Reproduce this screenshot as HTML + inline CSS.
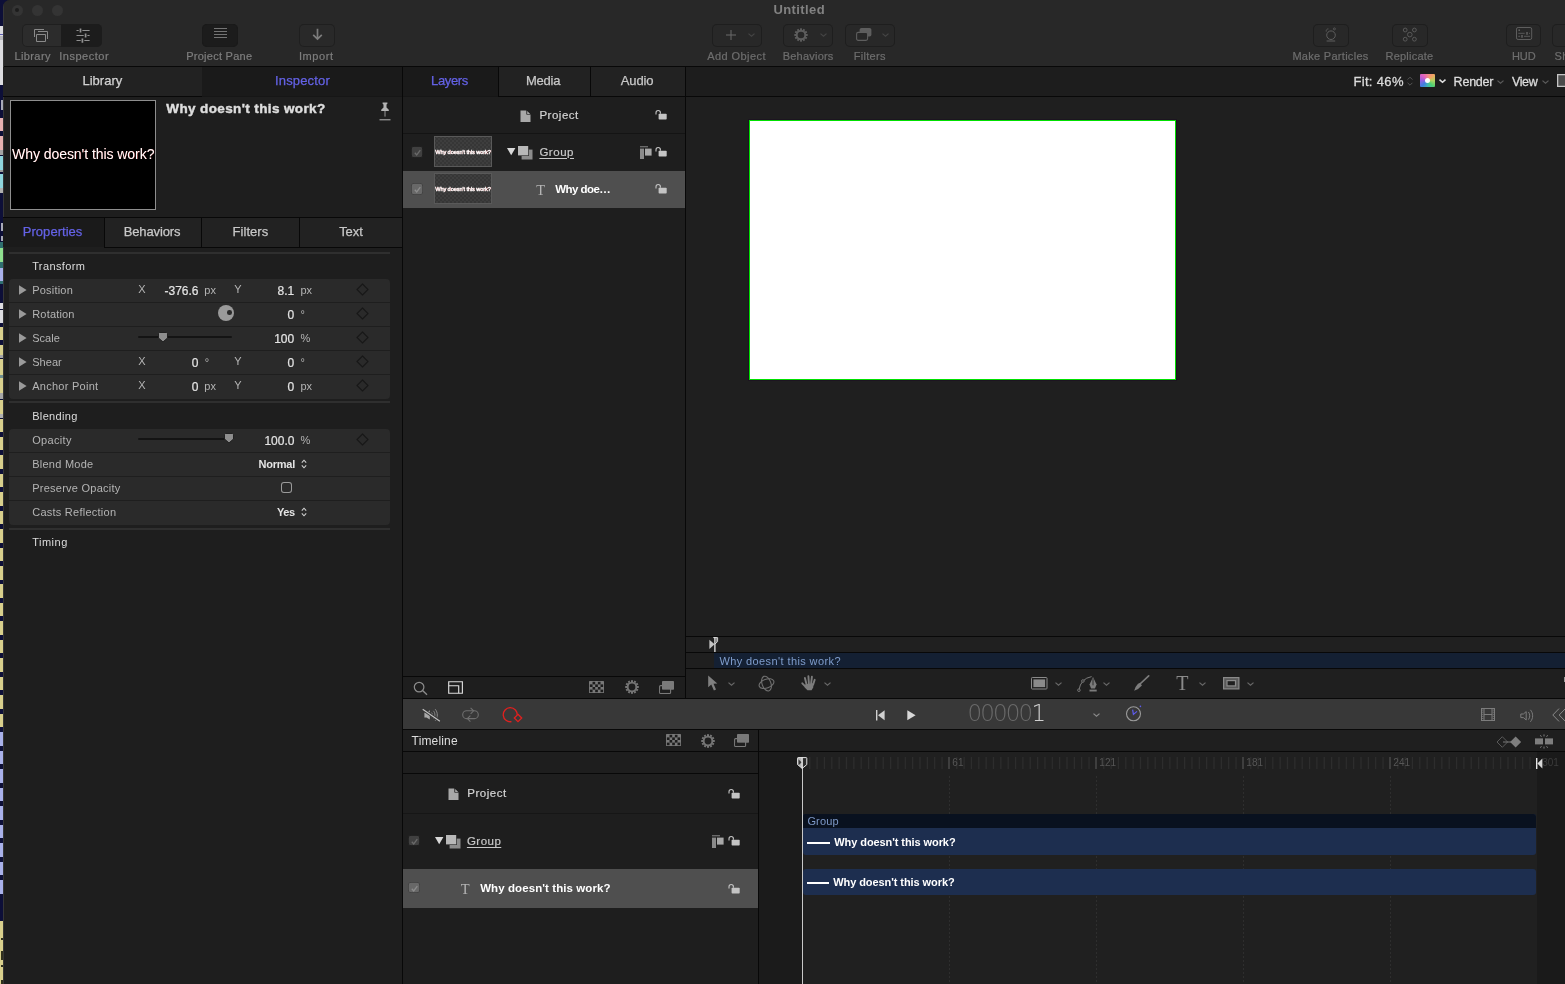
<!DOCTYPE html>
<html lang="en"><head><meta charset="utf-8"><title>Untitled</title>
<style>
html,body{margin:0;padding:0}
body{width:1565px;height:984px;overflow:hidden;position:relative;background:#0d0f38;font-family:"Liberation Sans",sans-serif}
body div,body svg,.t{position:absolute}
.t{white-space:nowrap;line-height:1}
svg{overflow:visible}
</style></head><body>
<div style="left:0px;top:25.5px;width:3px;height:59.5px;background:#dcdce0;"></div>
<div style="left:0px;top:34.0px;width:3px;height:1.0px;background:#5a5ab0;"></div>
<div style="left:0px;top:35.5px;width:3px;height:4.0px;background:#b8b8bc;"></div>
<div style="left:0px;top:118.0px;width:3px;height:13.0px;background:#e6b1b1;"></div>
<div style="left:0px;top:135.5px;width:3px;height:14.0px;background:#e6b1b1;"></div>
<div style="left:0px;top:149.5px;width:3px;height:5.5px;background:#a6a6a6;"></div>
<div style="left:0px;top:155.5px;width:3px;height:14.0px;background:#8fd6de;"></div>
<div style="left:0px;top:169.5px;width:3px;height:2.5px;background:#9a9a9a;"></div>
<div style="left:0px;top:174.0px;width:3px;height:13.5px;background:#8fd6de;"></div>
<div style="left:0px;top:188.0px;width:3px;height:4.5px;background:#b0b0b0;"></div>
<div style="left:0px;top:242.0px;width:3px;height:5.5px;background:#2f6f70;"></div>
<div style="left:0px;top:247.5px;width:3px;height:14.5px;background:#8fe08f;"></div>
<div style="left:0px;top:262.0px;width:3px;height:5.5px;background:#2f6f70;"></div>
<div style="left:0px;top:267.5px;width:3px;height:13.5px;background:#a9b1ea;"></div>
<div style="left:0px;top:281.0px;width:3px;height:3.0px;background:#2f6f70;"></div>
<div style="left:0px;top:309.5px;width:3px;height:13.0px;background:#dcdce0;"></div>
<div style="left:0px;top:303.0px;width:3px;height:5.5px;background:#dcdce0;"></div>
<div style="left:0px;top:327.0px;width:3px;height:13.0px;background:#d8cf8c;"></div>
<div style="left:0px;top:344.5px;width:3px;height:10.0px;background:#d8cf8c;"></div>
<div style="left:0px;top:354.5px;width:3px;height:3.5px;background:#a6a6a6;"></div>
<div style="left:0px;top:359.0px;width:3px;height:15.5px;background:#d8cf8c;"></div>
<div style="left:0px;top:374.5px;width:3px;height:3.0px;background:#6f8f90;"></div>
<div style="left:0px;top:378.0px;width:3px;height:15.0px;background:#d8cf8c;"></div>
<div style="left:0px;top:393.0px;width:3px;height:6.0px;background:#a6a6a6;"></div>
<div style="left:0px;top:400.0px;width:3px;height:13.5px;background:#d8cf8c;"></div>
<div style="left:0px;top:414.0px;width:3px;height:3.5px;background:#b0b0b0;"></div>
<div style="left:0px;top:418.5px;width:3px;height:13.5px;background:#d8cf8c;"></div>
<div style="left:0px;top:436.5px;width:3px;height:13.5px;background:#d8cf8c;"></div>
<div style="left:0px;top:455.0px;width:3px;height:13.5px;background:#d8cf8c;"></div>
<div style="left:0px;top:473.5px;width:3px;height:13.5px;background:#d8cf8c;"></div>
<div style="left:0px;top:492.0px;width:3px;height:13.5px;background:#d8cf8c;"></div>
<div style="left:0px;top:510.5px;width:3px;height:13.5px;background:#d8cf8c;"></div>
<div style="left:0px;top:529.0px;width:3px;height:13.5px;background:#d8cf8c;"></div>
<div style="left:0px;top:547.5px;width:3px;height:13.5px;background:#d8cf8c;"></div>
<div style="left:0px;top:566.0px;width:3px;height:13.5px;background:#d8cf8c;"></div>
<div style="left:0px;top:584.0px;width:3px;height:13.5px;background:#d8cf8c;"></div>
<div style="left:0px;top:602.5px;width:3px;height:13.5px;background:#d8cf8c;"></div>
<div style="left:0px;top:621.0px;width:3px;height:13.5px;background:#d8cf8c;"></div>
<div style="left:0px;top:639.5px;width:3px;height:13.5px;background:#d8cf8c;"></div>
<div style="left:0px;top:658.0px;width:3px;height:13.5px;background:#d8cf8c;"></div>
<div style="left:0px;top:676.5px;width:3px;height:13.5px;background:#d8cf8c;"></div>
<div style="left:0px;top:695.0px;width:3px;height:13.5px;background:#d8cf8c;"></div>
<div style="left:0px;top:713.5px;width:3px;height:13.5px;background:#d8cf8c;"></div>
<div style="left:0px;top:732.0px;width:3px;height:13.5px;background:#a9b1ea;"></div>
<div style="left:0px;top:750.5px;width:3px;height:13.5px;background:#a9b1ea;"></div>
<div style="left:0px;top:769.0px;width:3px;height:13.5px;background:#a9b1ea;"></div>
<div style="left:0px;top:787.5px;width:3px;height:13.5px;background:#a9b1ea;"></div>
<div style="left:0px;top:806.0px;width:3px;height:13.5px;background:#a9b1ea;"></div>
<div style="left:0px;top:824.5px;width:3px;height:13.5px;background:#a9b1ea;"></div>
<div style="left:0px;top:843.0px;width:3px;height:13.5px;background:#a9b1ea;"></div>
<div style="left:0px;top:861.5px;width:3px;height:13.5px;background:#a9b1ea;"></div>
<div style="left:0px;top:880.0px;width:3px;height:13.5px;background:#a9b1ea;"></div>
<div style="left:0px;top:921.0px;width:3px;height:63.0px;background:#d8cf8c;"></div>
<div style="left:0.5px;top:100px;width:2.5px;height:10px;background:#d0d0d8;opacity:.8;"></div>
<div style="left:0.5px;top:223px;width:2.5px;height:8px;background:#d0d0d8;opacity:.8;"></div>
<div style="left:0.5px;top:236px;width:2.5px;height:5px;background:#d0d0d8;opacity:.8;"></div>
<div style="left:0.5px;top:937.5px;width:2.5px;height:2.5px;background:#30301c;"></div>
<div style="left:0.5px;top:950.5px;width:2.5px;height:9.0px;background:#30301c;"></div>
<div style="left:0.5px;top:965px;width:2.5px;height:2px;background:#30301c;"></div>
<div style="left:0.5px;top:979.5px;width:2.5px;height:4.5px;background:#30301c;"></div>
<div id="win" style="left:3px;top:0;width:1562px;height:984px;background:#1e1e1e;border-top-left-radius:7px;overflow:hidden">
<div style="left:-3px;top:0;width:1565px;height:984px;will-change:transform">
<div style="left:3px;top:0px;width:1562px;height:66px;background:#282828;"></div>
<div style="left:3px;top:66px;width:1562px;height:1px;background:#080808;"></div>
<div style="left:3px;top:0px;width:1px;height:984px;background:#363636;"></div>
<div style="left:11.5px;top:4.5px;width:11px;height:11px;border-radius:50%;background:#343434"></div>
<div style="left:31.5px;top:4.5px;width:11px;height:11px;border-radius:50%;background:#343434"></div>
<div style="left:51.5px;top:4.5px;width:11px;height:11px;border-radius:50%;background:#343434"></div>
<div style="left:15px;top:8px;width:4px;height:4px;border-radius:50%;background:#1c1c1c"></div>
<span class="t" style="left:773.5px;top:2.90px;font-size:13px;color:#828282;font-weight:700;letter-spacing:0.39px;">Untitled</span>
<div style="left:21.5px;top:24px;width:80.5px;height:22.5px;border-radius:5px;background:#2c2c2c;box-shadow:inset 0 0 0 1px #1f1f1f;overflow:hidden"><div style="left:39.5px;top:0;width:41px;height:22.5px;background:#1c1c1c"></div></div>
<div style="left:202px;top:24px;width:36px;height:22.5px;border-radius:5px;background:#1c1c1c;box-shadow:inset 0 0 0 1px #1a1a1a"></div>
<div style="left:299px;top:24px;width:36px;height:22.5px;border-radius:5px;background:#292929;box-shadow:inset 0 0 0 1px #1f1f1f"></div>
<div style="left:712.3px;top:24px;width:49.5px;height:22.5px;border-radius:5px;background:#282828;box-shadow:inset 0 0 0 1px #1e1e1e"></div>
<div style="left:783.3px;top:24px;width:49.700000000000045px;height:22.5px;border-radius:5px;background:#282828;box-shadow:inset 0 0 0 1px #1e1e1e"></div>
<div style="left:845.2px;top:24px;width:49.5px;height:22.5px;border-radius:5px;background:#282828;box-shadow:inset 0 0 0 1px #1e1e1e"></div>
<div style="left:1313.1px;top:24px;width:35.600000000000136px;height:22.5px;border-radius:5px;background:#282828;box-shadow:inset 0 0 0 1px #1e1e1e"></div>
<div style="left:1392.2px;top:24px;width:35.399999999999864px;height:22.5px;border-radius:5px;background:#282828;box-shadow:inset 0 0 0 1px #1e1e1e"></div>
<div style="left:1506.3px;top:24px;width:35.200000000000045px;height:22.5px;border-radius:5px;background:#282828;box-shadow:inset 0 0 0 1px #1e1e1e"></div>
<div style="left:1552.4px;top:24px;width:37.59999999999991px;height:22.5px;border-radius:5px;background:#282828;box-shadow:inset 0 0 0 1px #1e1e1e"></div>
<span class="t" style="left:14.4px;top:50.80px;font-size:11px;color:#7e7e7e;letter-spacing:0.41px;-webkit-text-stroke:0.2px;">Library</span>
<span class="t" style="left:59.2px;top:50.80px;font-size:11px;color:#7e7e7e;letter-spacing:0.52px;-webkit-text-stroke:0.2px;">Inspector</span>
<span class="t" style="left:186.2px;top:50.80px;font-size:11px;color:#7e7e7e;letter-spacing:0.26px;-webkit-text-stroke:0.2px;">Project Pane</span>
<span class="t" style="left:299.0px;top:50.80px;font-size:11px;color:#7e7e7e;letter-spacing:0.56px;-webkit-text-stroke:0.2px;">Import</span>
<span class="t" style="left:707.2px;top:50.80px;font-size:11px;color:#6e6e6e;letter-spacing:0.43px;-webkit-text-stroke:0.2px;">Add Object</span>
<span class="t" style="left:782.7px;top:50.80px;font-size:11px;color:#6e6e6e;letter-spacing:0.22px;-webkit-text-stroke:0.2px;">Behaviors</span>
<span class="t" style="left:853.8px;top:50.80px;font-size:11px;color:#6e6e6e;letter-spacing:0.29px;-webkit-text-stroke:0.2px;">Filters</span>
<span class="t" style="left:1292.4px;top:50.80px;font-size:11px;color:#6e6e6e;letter-spacing:0.29px;-webkit-text-stroke:0.2px;">Make Particles</span>
<span class="t" style="left:1385.5px;top:50.80px;font-size:11px;color:#6e6e6e;letter-spacing:0.22px;-webkit-text-stroke:0.2px;">Replicate</span>
<span class="t" style="left:1511.9px;top:50.80px;font-size:11px;color:#6e6e6e;letter-spacing:0.03px;-webkit-text-stroke:0.2px;">HUD</span>
<span class="t" style="left:1554.4px;top:50.80px;font-size:11px;color:#6e6e6e;letter-spacing:0.4px;-webkit-text-stroke:0.2px;">Share</span>
<svg style="left:33px;top:28px;" width="16" height="15" viewBox="0 0 16 15"><path d="M1.5 9V1.5h9.5M5 3.5h9.5v7.5M3.5 6.5h9v7h-9z" fill="none" stroke="#8a8a8a" stroke-width="1"/></svg>
<svg style="left:75.5px;top:28px;" width="15" height="14" viewBox="0 0 15 14"><path d="M0.5 2.5h2.2M6.4 2.5h7.2M0.5 7.5h7.2M11.4 7.5h2.2M0.5 12.5h4.2M8.3 12.5h5.3" stroke="#909090" stroke-width="1.1" fill="none"/><path d="M4.5 0.4v4.1M9.6 5.5v4.1M6.4 10.6v4.1" stroke="#909090" stroke-width="1.7"/></svg>
<svg style="left:214px;top:28px;" width="13" height="10" viewBox="0 0 13 10"><path d="M0 0.5h13M0 3.5h13M0 6.5h13M0 9.5h13" stroke="#747474" stroke-width="1"/></svg>
<svg style="left:312px;top:28px;" width="11" height="13" viewBox="0 0 11 13"><path d="M5.5 0.8v10M1.2 6.8l4.3 4.3l4.3-4.3" fill="none" stroke="#7c7c7c" stroke-width="1.7"/></svg>
<svg style="left:725.5px;top:29.7px;" width="10" height="10" viewBox="0 0 10 10"><path d="M5 0v10M0 5h10" stroke="#6a6a6a" stroke-width="1"/></svg>
<svg style="left:748.3px;top:33.2px;" width="7" height="4.5" viewBox="0 0 7 4.5"><path d="M0.5 0.6L3.5 3.3L6.5 0.6" fill="none" stroke="#444444" stroke-width="1.2"/></svg>
<svg style="left:793.3px;top:26.6px;" width="16" height="16" viewBox="0 0 16 16"><g transform="translate(8 8) scale(0.98)"><circle r="4.35" fill="none" stroke="#5e5e5e" stroke-width="1.9"/><rect x="-1" y="-6.8" width="2" height="2" fill="#5e5e5e" transform="rotate(0)"/><rect x="-1" y="-6.8" width="2" height="2" fill="#5e5e5e" transform="rotate(30)"/><rect x="-1" y="-6.8" width="2" height="2" fill="#5e5e5e" transform="rotate(60)"/><rect x="-1" y="-6.8" width="2" height="2" fill="#5e5e5e" transform="rotate(90)"/><rect x="-1" y="-6.8" width="2" height="2" fill="#5e5e5e" transform="rotate(120)"/><rect x="-1" y="-6.8" width="2" height="2" fill="#5e5e5e" transform="rotate(150)"/><rect x="-1" y="-6.8" width="2" height="2" fill="#5e5e5e" transform="rotate(180)"/><rect x="-1" y="-6.8" width="2" height="2" fill="#5e5e5e" transform="rotate(210)"/><rect x="-1" y="-6.8" width="2" height="2" fill="#5e5e5e" transform="rotate(240)"/><rect x="-1" y="-6.8" width="2" height="2" fill="#5e5e5e" transform="rotate(270)"/><rect x="-1" y="-6.8" width="2" height="2" fill="#5e5e5e" transform="rotate(300)"/><rect x="-1" y="-6.8" width="2" height="2" fill="#5e5e5e" transform="rotate(330)"/></g></svg>
<svg style="left:819.5px;top:33.2px;" width="7" height="4.5" viewBox="0 0 7 4.5"><path d="M0.5 0.6L3.5 3.3L6.5 0.6" fill="none" stroke="#444444" stroke-width="1.2"/></svg>
<svg style="left:855.8px;top:28.2px;" width="15.5" height="13" viewBox="0 0 15.5 13"><rect x="3.6" y="0" width="11.8" height="8.6" rx="1.8" fill="#5e5e5e"/><rect x="0.6" y="4.4" width="11" height="8" rx="1.6" fill="#282828" stroke="#5e5e5e" stroke-width="1.1"/></svg>
<svg style="left:881.5px;top:33.2px;" width="7" height="4.5" viewBox="0 0 7 4.5"><path d="M0.5 0.6L3.5 3.3L6.5 0.6" fill="none" stroke="#444444" stroke-width="1.2"/></svg>
<svg style="left:1324px;top:26.5px;" width="14" height="15" viewBox="0 0 14 15"><circle cx="7" cy="8.2" r="4.3" fill="none" stroke="#5e5e5e" stroke-width="1"/><circle cx="10.4" cy="1.9" r="1" fill="none" stroke="#5e5e5e" stroke-width="0.8"/><path d="M2.2 4.6C2 3 3 1.8 4.4 1.9" fill="none" stroke="#5e5e5e" stroke-width="0.9"/><path d="M2.6 14h8.6" stroke="#5e5e5e" stroke-width="1"/></svg>
<svg style="left:1402px;top:26.5px;" width="16" height="16" viewBox="0 0 16 16"><g fill="none" stroke="#5e5e5e" stroke-width="0.9"><circle cx="7.8" cy="7.6" r="2.3"/><circle cx="3.2" cy="3" r="1.9"/><circle cx="12.4" cy="3" r="1.9"/><circle cx="3.2" cy="12.2" r="1.9"/><circle cx="12.4" cy="12.2" r="1.9"/></g></svg>
<svg style="left:1516px;top:27.1px;" width="16" height="13" viewBox="0 0 16 13"><rect x="0.5" y="0.5" width="15.2" height="12" rx="1.6" fill="none" stroke="#5e5e5e" stroke-width="1"/><rect x="2.4" y="2.4" width="1.6" height="1.6" fill="#5e5e5e"/><path d="M2.3 6.3h6.4M13 6.3h1M2.3 9.3h1.8M8 9.3h6" stroke="#5e5e5e" stroke-width="0.9"/><path d="M11 4.9v2.8M6 7.9v2.8" stroke="#5e5e5e" stroke-width="1.6"/></svg>
<div style="left:3px;top:67px;width:199px;height:29px;background:#222222;"></div>
<div style="left:202px;top:67px;width:200px;height:29px;background:#1a1a1a;"></div>
<div style="left:3px;top:96px;width:199px;height:1px;background:#080808;"></div>
<div style="left:202px;top:96px;width:200px;height:1px;background:#161616;"></div>
<div style="left:403px;top:96px;width:95px;height:1px;background:#161616;"></div>
<div style="left:402px;top:67px;width:1px;height:917px;background:#080808;"></div>
<span class="t" style="left:82.4px;top:74.00px;font-size:13px;color:#d2d2d2;letter-spacing:0.04px;-webkit-text-stroke:0.25px;">Library</span>
<span class="t" style="left:275.0px;top:73.80px;font-size:13px;color:#6462e6;letter-spacing:0.16px;-webkit-text-stroke:0.25px;">Inspector</span>
<div style="left:10px;top:100px;width:146px;height:110px;background:#000;box-shadow:inset 0 0 0 1px #8e8e8e"></div>
<span class="t" style="left:12.0px;top:147.00px;font-size:14px;color:#fff;letter-spacing:-0.05px;text-shadow:0.3px 0.3px 0.2px rgba(255,30,30,.55);">Why doesn't this work?</span>
<span class="t" style="left:166.3px;top:102.00px;font-size:13.5px;color:#dedede;font-weight:700;letter-spacing:0.38px;-webkit-text-stroke:0.45px;">Why doesn't this work?</span>
<svg style="left:378.5px;top:101.5px;" width="12" height="19" viewBox="0 0 12 19"><path d="M3.6 0.6h4.8v1.2l-0.9 0.8v3l2.3 2.2v1.3h-7.6v-1.3l2.3-2.2v-3l-0.9-0.8z" fill="#b4b4b4"/><path d="M6 9v5.6" stroke="#b4b4b4" stroke-width="0.8"/><path d="M0.5 17.8h11" stroke="#b4b4b4" stroke-width="1"/></svg>
<div style="left:3px;top:217px;width:399px;height:1px;background:#080808;"></div>
<div style="left:3px;top:218px;width:101px;height:29px;background:#1a1a1a;"></div>
<div style="left:104px;top:218px;width:97px;height:29px;background:#222222;"></div>
<div style="left:104px;top:218px;width:1px;height:30px;background:#080808;"></div>
<div style="left:201px;top:218px;width:98px;height:29px;background:#222222;"></div>
<div style="left:201px;top:218px;width:1px;height:30px;background:#080808;"></div>
<div style="left:299px;top:218px;width:103px;height:29px;background:#222222;"></div>
<div style="left:299px;top:218px;width:1px;height:30px;background:#080808;"></div>
<div style="left:104px;top:247px;width:298px;height:1px;background:#080808;"></div>
<span class="t" style="left:22.8px;top:224.50px;font-size:13px;color:#6462e6;letter-spacing:0.03px;-webkit-text-stroke:0.25px;">Properties</span>
<span class="t" style="left:123.7px;top:224.50px;font-size:13px;color:#c8c8c8;letter-spacing:-0.13px;-webkit-text-stroke:0.25px;">Behaviors</span>
<span class="t" style="left:232.6px;top:224.50px;font-size:13px;color:#c8c8c8;letter-spacing:0.03px;-webkit-text-stroke:0.25px;">Filters</span>
<span class="t" style="left:339.2px;top:224.50px;font-size:13px;color:#c8c8c8;letter-spacing:-0.08px;-webkit-text-stroke:0.25px;">Text</span>
<div style="left:9px;top:252px;width:381px;height:1.5px;background:#2f2f2f;"></div>
<div style="left:9px;top:401px;width:381px;height:1.5px;background:#2f2f2f;"></div>
<div style="left:9px;top:528px;width:381px;height:1.5px;background:#2f2f2f;"></div>
<span class="t" style="left:32.2px;top:260.80px;font-size:11px;color:#dcdcdc;letter-spacing:0.37px;">Transform</span>
<span class="t" style="left:32.2px;top:410.80px;font-size:11px;color:#dcdcdc;letter-spacing:0.34px;">Blending</span>
<span class="t" style="left:32.2px;top:537.30px;font-size:11px;color:#dcdcdc;letter-spacing:0.50px;">Timing</span>
<div style="left:9px;top:278.5px;width:381px;height:120px;background:#2a2a2a;border-radius:4px"></div>
<div style="left:9px;top:302.0px;width:381px;height:1px;background:#1e1e1e;"></div>
<div style="left:9px;top:326.0px;width:381px;height:1px;background:#1e1e1e;"></div>
<div style="left:9px;top:350.0px;width:381px;height:1px;background:#1e1e1e;"></div>
<div style="left:9px;top:374.0px;width:381px;height:1px;background:#1e1e1e;"></div>
<div style="left:9px;top:428.5px;width:381px;height:96px;background:#2a2a2a;border-radius:4px"></div>
<div style="left:9px;top:452.0px;width:381px;height:1px;background:#1e1e1e;"></div>
<div style="left:9px;top:476.0px;width:381px;height:1px;background:#1e1e1e;"></div>
<div style="left:9px;top:500.0px;width:381px;height:1px;background:#1e1e1e;"></div>
<span class="t" style="left:32.2px;top:284.90px;font-size:11px;color:#b4b4b4;letter-spacing:0.21px;">Position</span>
<svg style="left:18.8px;top:285.3px;" width="8" height="10" viewBox="0 0 8 10"><path d="M0 0.3L7.6 5L0 9.7z" fill="#9a9a9a"/></svg>
<svg style="left:356px;top:283.1px;" width="13" height="13" viewBox="0 0 13 13"><path d="M6.5 1L12 6.5L6.5 12L1 6.5z" fill="none" stroke="#171717" stroke-width="1.1"/></svg>
<span class="t" style="left:32.2px;top:308.90px;font-size:11px;color:#b4b4b4;letter-spacing:0.19px;">Rotation</span>
<svg style="left:18.8px;top:309.3px;" width="8" height="10" viewBox="0 0 8 10"><path d="M0 0.3L7.6 5L0 9.7z" fill="#9a9a9a"/></svg>
<svg style="left:356px;top:307.1px;" width="13" height="13" viewBox="0 0 13 13"><path d="M6.5 1L12 6.5L6.5 12L1 6.5z" fill="none" stroke="#171717" stroke-width="1.1"/></svg>
<span class="t" style="left:32.2px;top:332.90px;font-size:11px;color:#b4b4b4;letter-spacing:0.02px;">Scale</span>
<svg style="left:18.8px;top:333.3px;" width="8" height="10" viewBox="0 0 8 10"><path d="M0 0.3L7.6 5L0 9.7z" fill="#9a9a9a"/></svg>
<svg style="left:356px;top:331.1px;" width="13" height="13" viewBox="0 0 13 13"><path d="M6.5 1L12 6.5L6.5 12L1 6.5z" fill="none" stroke="#171717" stroke-width="1.1"/></svg>
<span class="t" style="left:32.2px;top:356.90px;font-size:11px;color:#b4b4b4;letter-spacing:0.06px;">Shear</span>
<svg style="left:18.8px;top:357.3px;" width="8" height="10" viewBox="0 0 8 10"><path d="M0 0.3L7.6 5L0 9.7z" fill="#9a9a9a"/></svg>
<svg style="left:356px;top:355.1px;" width="13" height="13" viewBox="0 0 13 13"><path d="M6.5 1L12 6.5L6.5 12L1 6.5z" fill="none" stroke="#171717" stroke-width="1.1"/></svg>
<span class="t" style="left:32.2px;top:380.90px;font-size:11px;color:#b4b4b4;letter-spacing:0.27px;">Anchor Point</span>
<svg style="left:18.8px;top:381.3px;" width="8" height="10" viewBox="0 0 8 10"><path d="M0 0.3L7.6 5L0 9.7z" fill="#9a9a9a"/></svg>
<svg style="left:356px;top:379.1px;" width="13" height="13" viewBox="0 0 13 13"><path d="M6.5 1L12 6.5L6.5 12L1 6.5z" fill="none" stroke="#171717" stroke-width="1.1"/></svg>
<span class="t" style="left:32.2px;top:434.90px;font-size:11px;color:#b4b4b4;letter-spacing:0.33px;">Opacity</span>
<span class="t" style="left:32.2px;top:458.90px;font-size:11px;color:#b4b4b4;letter-spacing:0.26px;">Blend Mode</span>
<span class="t" style="left:32.2px;top:482.90px;font-size:11px;color:#b4b4b4;letter-spacing:0.25px;">Preserve Opacity</span>
<span class="t" style="left:32.2px;top:506.90px;font-size:11px;color:#b4b4b4;letter-spacing:0.25px;">Casts Reflection</span>
<svg style="left:356px;top:433.1px;" width="13" height="13" viewBox="0 0 13 13"><path d="M6.5 1L12 6.5L6.5 12L1 6.5z" fill="none" stroke="#171717" stroke-width="1.1"/></svg>
<span class="t" style="left:138.2px;top:283.80px;font-size:11px;color:#b4b4b4;">X</span>
<span class="t" style="left:234.2px;top:283.80px;font-size:11px;color:#b4b4b4;">Y</span>
<span class="t" style="right:1366.5px;top:284.70px;font-size:12px;color:#e4e4e4;-webkit-text-stroke:0.2px;">-376.6</span>
<span class="t" style="right:1270.8px;top:284.70px;font-size:12px;color:#e4e4e4;-webkit-text-stroke:0.2px;">8.1</span>
<span class="t" style="left:204.3px;top:284.70px;font-size:11px;color:#b4b4b4;">px</span>
<span class="t" style="left:300.4px;top:284.70px;font-size:11px;color:#b4b4b4;">px</span>
<span class="t" style="left:138.2px;top:355.80px;font-size:11px;color:#b4b4b4;">X</span>
<span class="t" style="left:234.2px;top:355.80px;font-size:11px;color:#b4b4b4;">Y</span>
<span class="t" style="right:1366.5px;top:356.70px;font-size:12px;color:#e4e4e4;-webkit-text-stroke:0.2px;">0</span>
<span class="t" style="right:1270.8px;top:356.70px;font-size:12px;color:#e4e4e4;-webkit-text-stroke:0.2px;">0</span>
<span class="t" style="left:204.8px;top:356.70px;font-size:11px;color:#b4b4b4;">°</span>
<span class="t" style="left:300.6px;top:356.70px;font-size:11px;color:#b4b4b4;">°</span>
<span class="t" style="left:138.2px;top:379.80px;font-size:11px;color:#b4b4b4;">X</span>
<span class="t" style="left:234.2px;top:379.80px;font-size:11px;color:#b4b4b4;">Y</span>
<span class="t" style="right:1366.5px;top:380.70px;font-size:12px;color:#e4e4e4;-webkit-text-stroke:0.2px;">0</span>
<span class="t" style="right:1270.8px;top:380.70px;font-size:12px;color:#e4e4e4;-webkit-text-stroke:0.2px;">0</span>
<span class="t" style="left:204.3px;top:380.70px;font-size:11px;color:#b4b4b4;">px</span>
<span class="t" style="left:300.4px;top:380.70px;font-size:11px;color:#b4b4b4;">px</span>
<span class="t" style="right:1270.8px;top:308.70px;font-size:12px;color:#e4e4e4;-webkit-text-stroke:0.2px;">0</span>
<span class="t" style="left:300.6px;top:308.70px;font-size:11px;color:#b4b4b4;">°</span>
<span class="t" style="right:1270.8px;top:332.70px;font-size:12px;color:#e4e4e4;-webkit-text-stroke:0.2px;">100</span>
<span class="t" style="left:300.4px;top:332.70px;font-size:11px;color:#b4b4b4;">%</span>
<span class="t" style="right:1270.6px;top:434.70px;font-size:12px;color:#e4e4e4;-webkit-text-stroke:0.2px;">100.0</span>
<span class="t" style="left:300.4px;top:434.70px;font-size:11px;color:#b4b4b4;">%</span>
<span class="t" style="left:258.5px;top:458.90px;font-size:11px;color:#e4e4e4;font-weight:700;letter-spacing:-0.24px;">Normal</span>
<span class="t" style="left:277.0px;top:506.90px;font-size:11px;color:#e4e4e4;font-weight:700;letter-spacing:-0.38px;">Yes</span>
<svg style="left:300.5px;top:459px;" width="6" height="10" viewBox="0 0 6 10"><path d="M0.8 3.6L3 1.2L5.2 3.6M0.8 6.4L3 8.8L5.2 6.4" fill="none" stroke="#d0d0d0" stroke-width="1.1"/></svg>
<svg style="left:300.5px;top:507px;" width="6" height="10" viewBox="0 0 6 10"><path d="M0.8 3.6L3 1.2L5.2 3.6M0.8 6.4L3 8.8L5.2 6.4" fill="none" stroke="#d0d0d0" stroke-width="1.1"/></svg>
<div style="left:280.5px;top:481.5px;width:11px;height:11px;border-radius:3px;box-shadow:inset 0 0 0 1px #9a9a9a"></div>
<div style="left:218px;top:305px;width:16px;height:16px;border-radius:50%;background:#9a9a9a"></div>
<div style="left:227.3px;top:310.3px;width:4.6px;height:4.6px;border-radius:50%;background:#2a2a2a"></div>
<div style="left:137.5px;top:335.8px;width:94px;height:2px;background:#141414;border-radius:1px;"></div>
<svg style="left:157.6px;top:331.5px;" width="10" height="10.4" viewBox="0 0 10 10.4"><path d="M1.6 0.5h6.8a1.1 1.1 0 0 1 1.1 1.1v4.4L5 9.9L0.5 6V1.6a1.1 1.1 0 0 1 1.1-1.1z" fill="#8e8e8e" stroke="#1b1b1b" stroke-width="0.9"/></svg>
<div style="left:137.5px;top:437.5px;width:94px;height:2px;background:#141414;border-radius:1px;"></div>
<svg style="left:223.6px;top:433.2px;" width="10" height="10.4" viewBox="0 0 10 10.4"><path d="M1.6 0.5h6.8a1.1 1.1 0 0 1 1.1 1.1v4.4L5 9.9L0.5 6V1.6a1.1 1.1 0 0 1 1.1-1.1z" fill="#8e8e8e" stroke="#1b1b1b" stroke-width="0.9"/></svg>
<div style="left:403px;top:67px;width:95px;height:29px;background:#1a1a1a;"></div>
<div style="left:498px;top:67px;width:187px;height:29px;background:#222222;"></div>
<div style="left:498px;top:67px;width:1px;height:29px;background:#080808;"></div>
<div style="left:589.5px;top:67px;width:1px;height:29px;background:#080808;"></div>
<div style="left:498px;top:96px;width:187px;height:1px;background:#080808;"></div>
<div style="left:685px;top:67px;width:1.6px;height:632px;background:#080808;"></div>
<span class="t" style="left:431.0px;top:73.90px;font-size:13px;color:#6462e6;letter-spacing:-0.33px;-webkit-text-stroke:0.25px;">Layers</span>
<span class="t" style="left:526.0px;top:73.90px;font-size:13px;color:#c8c8c8;letter-spacing:-0.26px;-webkit-text-stroke:0.25px;">Media</span>
<span class="t" style="left:620.8px;top:73.90px;font-size:13px;color:#c8c8c8;letter-spacing:-0.16px;-webkit-text-stroke:0.25px;">Audio</span>
<div style="left:403px;top:133px;width:282px;height:1px;background:#141414;"></div>
<div style="left:403px;top:171px;width:282px;height:36.5px;background:#4f4f4f;"></div>
<svg style="left:519.8px;top:109.6px;" width="11" height="12.5" viewBox="0 0 11 12.5"><path d="M0.5 0.5h6l4 4v7.5h-10z" fill="#a8a8a8"/><path d="M6.7 0.3v4h4z" fill="#1f1f1f" stroke="#1f1f1f" stroke-width="0.6"/><path d="M7.2 0.9l3 3h-3z" fill="#a8a8a8"/></svg>
<span class="t" style="left:539.4px;top:110.00px;font-size:11.5px;color:#d4d4d4;letter-spacing:0.52px;-webkit-text-stroke:0.2px;">Project</span>
<svg style="left:654.6px;top:109.0px;" width="12" height="10.8" viewBox="0 0 12 10.8"><rect x="3.6" y="4.7" width="8.1" height="5.8" rx="0.8" fill="#c4c4c4"/><path d="M1 5.4V3.7a2.2 2.2 0 0 1 4.4 0V4.8" fill="none" stroke="#c4c4c4" stroke-width="1.1"/></svg>
<div style="left:411.3px;top:146.29999999999998px;width:11.4px;height:11.4px;border-radius:3px;background:#404040;box-shadow:inset 0 0 0 0.7px #191919"></div>
<svg style="left:411.5px;top:146.7px;" width="11" height="11" viewBox="0 0 11 11"><path d="M2.8 5.8L4.7 7.9L8.3 3.1" fill="none" stroke="#6a6a6a" stroke-width="1.3"/></svg>
<div style="left:434px;top:136px;width:58px;height:31px;box-shadow:inset 0 0 0 1px #595959;background-color:#363636;background-image:linear-gradient(45deg,#3e3e3e 25%,transparent 25%,transparent 75%,#3e3e3e 75%),linear-gradient(45deg,#3e3e3e 25%,transparent 25%,transparent 75%,#3e3e3e 75%);background-size:4px 4px;background-position:0 0,2px 2px"></div>
<span class="t" style="left:435.2px;top:149.70px;font-size:5.6px;color:#fff;letter-spacing:-0.08px;-webkit-text-stroke:0.35px #fff;text-shadow:0.4px 0.3px 0.2px rgba(230,20,20,.7);">Why doesn't this work?</span>
<svg style="left:507.2px;top:148.2px;" width="8.5" height="7.5" viewBox="0 0 8.5 7.5"><path d="M0 0h8.4L4.2 7.3z" fill="#d8d8d8"/></svg>
<svg style="left:517.9px;top:146px;" width="14.5" height="13.5" viewBox="0 0 14.5 13.5"><rect x="3.6" y="3.6" width="10.9" height="9.9" fill="#8c8c8c"/><rect x="-0.6" y="-0.6" width="11.4" height="10.6" fill="#1d1d1d"/><rect x="0" y="0" width="10.2" height="9.4" fill="#b8b8b8"/></svg>
<span class="t" style="left:539.4px;top:146.80px;font-size:11.5px;color:#c8c8c8;letter-spacing:0.53px;text-decoration:underline;text-underline-offset:2px;text-decoration-thickness:1.3px;-webkit-text-stroke:0.2px;">Group</span>
<svg style="left:639.6px;top:146.2px;" width="12" height="13" viewBox="0 0 12 13"><rect x="0" y="0" width="8" height="1.4" fill="#8a8a8a" opacity=".7"/><rect x="0" y="2.6" width="4" height="10.4" fill="#8a8a8a"/><rect x="5" y="2.6" width="6.6" height="7" fill="#a8a8a8"/></svg>
<svg style="left:654.6px;top:146.0px;" width="12" height="10.8" viewBox="0 0 12 10.8"><rect x="3.6" y="4.7" width="8.1" height="5.8" rx="0.8" fill="#c4c4c4"/><path d="M1 5.4V3.7a2.2 2.2 0 0 1 4.4 0V4.8" fill="none" stroke="#c4c4c4" stroke-width="1.1"/></svg>
<div style="left:411.3px;top:183.29999999999998px;width:11.4px;height:11.4px;border-radius:3px;background:#686868;box-shadow:inset 0 0 0 0.7px #3c3c3c"></div>
<svg style="left:411.5px;top:183.7px;" width="11" height="11" viewBox="0 0 11 11"><path d="M2.8 5.8L4.7 7.9L8.3 3.1" fill="none" stroke="#8c8c8c" stroke-width="1.3"/></svg>
<div style="left:434px;top:173px;width:58px;height:31px;box-shadow:inset 0 0 0 1px #595959;background-color:#363636;background-image:linear-gradient(45deg,#3e3e3e 25%,transparent 25%,transparent 75%,#3e3e3e 75%),linear-gradient(45deg,#3e3e3e 25%,transparent 25%,transparent 75%,#3e3e3e 75%);background-size:4px 4px;background-position:0 0,2px 2px"></div>
<span class="t" style="left:435.2px;top:186.70px;font-size:5.6px;color:#fff;letter-spacing:-0.08px;-webkit-text-stroke:0.35px #fff;text-shadow:0.4px 0.3px 0.2px rgba(230,20,20,.7);">Why doesn't this work?</span>
<span class="t" style="left:536.2px;top:182.80px;font-size:14.5px;color:#b4b4b4;font-family:'Liberation Serif', serif;">T</span>
<span class="t" style="left:555.3px;top:184.20px;font-size:11.5px;color:#fff;font-weight:700;letter-spacing:-0.55px;">Why doe…</span>
<svg style="left:654.6px;top:183.0px;" width="12" height="10.8" viewBox="0 0 12 10.8"><rect x="3.6" y="4.7" width="8.1" height="5.8" rx="0.8" fill="#c4c4c4"/><path d="M1 5.4V3.7a2.2 2.2 0 0 1 4.4 0V4.8" fill="none" stroke="#c4c4c4" stroke-width="1.1"/></svg>
<div style="left:403px;top:676px;width:282px;height:1px;background:#080808;"></div>
<div style="left:403px;top:698px;width:1162px;height:1px;background:#080808;"></div>
<svg style="left:413px;top:681px;" width="15" height="14" viewBox="0 0 15 14"><circle cx="6.1" cy="6.1" r="4.8" fill="none" stroke="#8c8c8c" stroke-width="1.2"/><path d="M9.6 9.6L14 13.7" stroke="#8c8c8c" stroke-width="1.4"/></svg>
<svg style="left:447.9px;top:681px;" width="15.1" height="13" viewBox="0 0 15.1 13"><path d="M0.7 0.7h13.7v11.6h-13.7z" fill="none" stroke="#dcdcdc" stroke-width="1.15"/><path d="M0.7 4.7h10v7.6" fill="none" stroke="#dcdcdc" stroke-width="1.15"/></svg>
<svg style="left:589px;top:681px;" width="15" height="12" viewBox="0 0 15 12"><rect x="0" y="0" width="15" height="12" rx="0.6" fill="#787878"/><rect x="3.55" y="0.80" width="2.65" height="2.6" fill="#1c1c1c"/><rect x="8.85" y="0.80" width="2.65" height="2.6" fill="#1c1c1c"/><rect x="0.90" y="3.40" width="2.65" height="2.6" fill="#1c1c1c"/><rect x="6.20" y="3.40" width="2.65" height="2.6" fill="#1c1c1c"/><rect x="11.50" y="3.40" width="2.65" height="2.6" fill="#1c1c1c"/><rect x="3.55" y="6.00" width="2.65" height="2.6" fill="#1c1c1c"/><rect x="8.85" y="6.00" width="2.65" height="2.6" fill="#1c1c1c"/><rect x="0.90" y="8.60" width="2.65" height="2.6" fill="#1c1c1c"/><rect x="6.20" y="8.60" width="2.65" height="2.6" fill="#1c1c1c"/><rect x="11.50" y="8.60" width="2.65" height="2.6" fill="#1c1c1c"/></svg>
<svg style="left:623.5px;top:679.4px;" width="16" height="16" viewBox="0 0 16 16"><g transform="translate(8 8) scale(1)"><circle r="4.35" fill="none" stroke="#767676" stroke-width="1.9"/><rect x="-1" y="-6.8" width="2" height="2" fill="#767676" transform="rotate(0)"/><rect x="-1" y="-6.8" width="2" height="2" fill="#767676" transform="rotate(30)"/><rect x="-1" y="-6.8" width="2" height="2" fill="#767676" transform="rotate(60)"/><rect x="-1" y="-6.8" width="2" height="2" fill="#767676" transform="rotate(90)"/><rect x="-1" y="-6.8" width="2" height="2" fill="#767676" transform="rotate(120)"/><rect x="-1" y="-6.8" width="2" height="2" fill="#767676" transform="rotate(150)"/><rect x="-1" y="-6.8" width="2" height="2" fill="#767676" transform="rotate(180)"/><rect x="-1" y="-6.8" width="2" height="2" fill="#767676" transform="rotate(210)"/><rect x="-1" y="-6.8" width="2" height="2" fill="#767676" transform="rotate(240)"/><rect x="-1" y="-6.8" width="2" height="2" fill="#767676" transform="rotate(270)"/><rect x="-1" y="-6.8" width="2" height="2" fill="#767676" transform="rotate(300)"/><rect x="-1" y="-6.8" width="2" height="2" fill="#767676" transform="rotate(330)"/></g></svg>
<svg style="left:659px;top:681px;" width="15" height="13" viewBox="0 0 15 13"><rect x="3" y="0" width="12" height="8.8" rx="0.8" fill="#7a7a7a"/><rect x="0.6" y="4.6" width="11" height="7.8" rx="1" fill="none" stroke="#7a7a7a" stroke-width="1.1"/><rect x="1.2" y="8.9" width="9.8" height="2.9" fill="#1f1f1f"/></svg>
<div style="left:686px;top:67px;width:879px;height:29px;background:#1d1d1d;"></div>
<div style="left:686px;top:96px;width:879px;height:1px;background:#080808;"></div>
<div style="left:686px;top:97px;width:879px;height:539px;background:#1f1f1f;"></div>
<span class="t" style="left:1353.4px;top:74.50px;font-size:13px;color:#dcdcdc;letter-spacing:0.34px;-webkit-text-stroke:0.3px;">Fit: 46%</span>
<span class="t" style="left:1453.6px;top:75.50px;font-size:12.5px;color:#dcdcdc;letter-spacing:-0.22px;-webkit-text-stroke:0.3px;">Render</span>
<span class="t" style="left:1511.9px;top:75.50px;font-size:12.5px;color:#dcdcdc;letter-spacing:-0.33px;-webkit-text-stroke:0.3px;">View</span>
<svg style="left:1406.7px;top:76px;" width="6" height="11" viewBox="0 0 6 11"><path d="M0.6 3.6L3 1.2L5.4 3.6M0.6 6.8L3 9.2L5.4 6.8" fill="none" stroke="#565656" stroke-width="1"/></svg>
<div style="left:1420px;top:74px;width:15px;height:13px;border-radius:1px;background:conic-gradient(from 0deg at 50% 50%,#f0858f 0deg,#f2a262 45deg,#b4d260 90deg,#4fd072 135deg,#40b4b4 180deg,#3f7fe2 225deg,#9462e2 270deg,#e060c2 315deg,#f0858f 360deg)"></div>
<div style="left:1425px;top:78px;width:5.2px;height:5.2px;border-radius:50%;background:#fff"></div>
<svg style="left:1439px;top:79.3px;" width="7" height="4.5" viewBox="0 0 7 4.5"><path d="M0.5 0.6L3.5 3.3L6.5 0.6" fill="none" stroke="#e0e0e0" stroke-width="1.5"/></svg>
<svg style="left:1497px;top:80px;" width="7" height="4.5" viewBox="0 0 7 4.5"><path d="M0.5 0.6L3.5 3.3L6.5 0.6" fill="none" stroke="#5c5c5c" stroke-width="1.2"/></svg>
<svg style="left:1542.2px;top:80px;" width="7" height="4.5" viewBox="0 0 7 4.5"><path d="M0.5 0.6L3.5 3.3L6.5 0.6" fill="none" stroke="#5c5c5c" stroke-width="1.2"/></svg>
<div style="left:1557px;top:74.3px;width:14px;height:12.7px;background:#4c4c4c;box-shadow:inset 0 0 0 1.3px #c4c4c4"></div>
<div style="left:748px;top:119px;width:429px;height:262px;background:#1c1420"></div>
<div style="left:749px;top:120px;width:427px;height:260px;background:#fff;box-shadow:inset 0 0 0 1px #00e000"></div>
<div style="left:686px;top:636px;width:879px;height:1px;background:#080808;"></div>
<div style="left:686px;top:637px;width:879px;height:15px;background:#202020;"></div>
<div style="left:686px;top:652px;width:879px;height:1px;background:#080808;"></div>
<div style="left:686px;top:653px;width:879px;height:15px;background:#1f1f1f;"></div>
<div style="left:714px;top:653px;width:851px;height:15px;background:#142033;"></div>
<div style="left:686px;top:668px;width:879px;height:1px;background:#080808;"></div>
<div style="left:686px;top:669px;width:879px;height:29px;background:#1f1f1f;"></div>
<span class="t" style="left:719.4px;top:655.90px;font-size:11px;color:#7f9dcc;letter-spacing:0.40px;">Why doesn't this work?</span>
<svg style="left:708.5px;top:637px;" width="10" height="15" viewBox="0 0 10 15"><path d="M0.4 2.7V12L5.6 7.3z" fill="#c4c4c4"/><path d="M4.2 0.6h4.4v4L6 6.9" fill="none" stroke="#e4e4e4" stroke-width="0.9"/><path d="M7.3 0.6v4.6" stroke="#e4e4e4" stroke-width="0.7"/><path d="M5.9 0.3v14.6" stroke="#f2f2f2" stroke-width="1.2"/></svg>
<svg style="left:707.8px;top:675px;" width="10.5" height="16" viewBox="0 0 10.5 16"><path d="M0.2 0.4V12.2L3.3 9.4L5.9 15.4L8 14.5L5.5 8.7L9.3 8.5z" fill="#808080"/></svg>
<svg style="left:728.2px;top:681.8px;" width="7" height="4.5" viewBox="0 0 7 4.5"><path d="M0.5 0.6L3.5 3.3L6.5 0.6" fill="none" stroke="#686868" stroke-width="1.2"/></svg>
<svg style="left:757.5px;top:674.5px;" width="17" height="17" viewBox="0 0 17 17"><g fill="none" stroke="#707070" stroke-width="1.1" transform="translate(8.5 8.6) rotate(-20)"><ellipse rx="7.7" ry="4.4"/><ellipse rx="4.4" ry="7.7"/></g></svg>
<svg style="left:800.5px;top:675px;" width="15" height="16" viewBox="0 0 15 16"><path d="M4.4 9.2L12.6 8.2L12.2 12.4L10.6 15.2H6.4L3.6 12.2z" fill="#7c7c7c"/><g stroke="#7c7c7c" stroke-width="1.9" stroke-linecap="round" fill="none"><path d="M5.6 9.4L3.9 2.9"/><path d="M7.9 8.6L7.4 1.2"/><path d="M10.1 8.6L10.9 1.8"/><path d="M12.1 9.6L13.7 4.8"/><path d="M5.2 12.4L1.3 8.3"/></g></svg>
<svg style="left:824.2px;top:681.8px;" width="7" height="4.5" viewBox="0 0 7 4.5"><path d="M0.5 0.6L3.5 3.3L6.5 0.6" fill="none" stroke="#686868" stroke-width="1.2"/></svg>
<svg style="left:1031px;top:677px;" width="16.5" height="12.5" viewBox="0 0 16.5 12.5"><rect x="0.5" y="0.5" width="15.5" height="11.5" rx="0.8" fill="none" stroke="#8a8a8a" stroke-width="1"/><rect x="2.4" y="2.4" width="11.7" height="7.7" fill="#8a8a8a"/></svg>
<svg style="left:1055px;top:681.8px;" width="7" height="4.5" viewBox="0 0 7 4.5"><path d="M0.5 0.6L3.5 3.3L6.5 0.6" fill="none" stroke="#686868" stroke-width="1.2"/></svg>
<svg style="left:1076.5px;top:675.5px;" width="20" height="16" viewBox="0 0 20 16"><path d="M1.9 14.2Q3.65 2.6 14.6 0.6" fill="none" stroke="#7c7c7c" stroke-width="1"/><circle cx="1.9" cy="14.2" r="1.3" fill="#1f1f1f" stroke="#7c7c7c" stroke-width="0.9"/><circle cx="5.9" cy="5" r="1.3" fill="#1f1f1f" stroke="#7c7c7c" stroke-width="0.9"/><path d="M16 1L12.5 8.4L14.1 12.4H17.9L19.6 8.4z" fill="#7c7c7c"/><path d="M16 2.5v6.8" stroke="#262626" stroke-width="0.9"/><rect x="12.5" y="13.6" width="7.2" height="1.9" fill="#7c7c7c"/></svg>
<svg style="left:1103px;top:681.8px;" width="7" height="4.5" viewBox="0 0 7 4.5"><path d="M0.5 0.6L3.5 3.3L6.5 0.6" fill="none" stroke="#686868" stroke-width="1.2"/></svg>
<svg style="left:1134px;top:674.5px;" width="16" height="16" viewBox="0 0 16 16"><path d="M14.7 0.9L6 9" stroke="#7c7c7c" stroke-width="1.7" stroke-linecap="round"/><path d="M6.2 7.8L7.9 10.6Q5 14.2 0.2 15.7Q1.4 11.4 4 8.8z" fill="#7c7c7c"/></svg>
<span class="t" style="left:1176.2px;top:673.00px;font-size:20px;color:#8a8a8a;font-family:'Liberation Serif', serif;">T</span>
<svg style="left:1199px;top:681.8px;" width="7" height="4.5" viewBox="0 0 7 4.5"><path d="M0.5 0.6L3.5 3.3L6.5 0.6" fill="none" stroke="#686868" stroke-width="1.2"/></svg>
<svg style="left:1222.8px;top:677px;" width="16.5" height="12.5" viewBox="0 0 16.5 12.5"><rect x="0.6" y="0.6" width="15.3" height="11.3" fill="#5a5a5a" stroke="#8a8a8a" stroke-width="1.2"/><rect x="4" y="3.6" width="8.5" height="5.3" fill="#1f1f1f" stroke="#8a8a8a" stroke-width="1.2"/></svg>
<svg style="left:1246.9px;top:681.8px;" width="7" height="4.5" viewBox="0 0 7 4.5"><path d="M0.5 0.6L3.5 3.3L6.5 0.6" fill="none" stroke="#686868" stroke-width="1.2"/></svg>
<div style="left:1563.5px;top:677px;width:1.5px;height:5px;background:#9a9a9a;"></div>
<div style="left:403px;top:699px;width:1162px;height:30px;background:#383838;"></div>
<div style="left:403px;top:729px;width:1162px;height:1px;background:#080808;"></div>
<svg style="left:422px;top:707.5px;" width="18" height="14" viewBox="0 0 18 14"><path d="M2.4 4.6h2L7.8 2.2v9.2L4.4 9.4h-2z" fill="#a8a8a8"/><path d="M9.6 4.6c1 1.2 1 3.4 0 4.6M11.4 2.8c2 2.2 2 6 0 8.2M13.2 1.2c2.8 3.2 2.8 8.4 0 11.6" fill="none" stroke="#8a8a8a" stroke-width="1"/><path d="M0.7 1.3L17.9 13.2" stroke="#383838" stroke-width="3"/><path d="M0.7 1.3L17.9 13.2" stroke="#c4c4c4" stroke-width="1.1"/></svg>
<svg style="left:461.5px;top:706.5px;" width="17" height="15.5" viewBox="0 0 17 15.5"><path d="M6 3.8H4.6A3.9 3.9 0 0 0 4.6 11.6H11" fill="none" stroke="#6e6e6e" stroke-width="1.1"/><path d="M11 11.6H12.4A3.9 3.9 0 0 0 12.4 3.8H6" fill="none" stroke="#6e6e6e" stroke-width="1.1"/><path d="M8.6 0.8L11.6 3.8L8.6 6.8M8.4 8.6L5.4 11.6L8.4 14.6" fill="none" stroke="#6e6e6e" stroke-width="1.1"/></svg>
<svg style="left:502px;top:706.5px;" width="22" height="17" viewBox="0 0 22 17"><path d="M15.2 8.4A7 7 0 1 0 9.5 14.6" fill="none" stroke="#e0201f" stroke-width="1.3"/><path d="M16 7.3L19.7 11L16 14.7L12.3 11z" fill="#383838" stroke="#e0201f" stroke-width="1.3"/></svg>
<svg style="left:875.5px;top:709.5px;" width="9" height="10.5" viewBox="0 0 9 10.5"><path d="M0.7 0v10.5" stroke="#d0d0d0" stroke-width="1.4"/><path d="M8.6 0.3L2 5.25L8.6 10.2z" fill="#d0d0d0"/></svg>
<svg style="left:906.5px;top:709.5px;" width="9" height="10.5" viewBox="0 0 9 10.5"><path d="M0.3 0.2L8.6 5.25L0.3 10.3z" fill="#d8d8d8"/></svg>
<span class="t" style="left:967.6px;top:702.00px;font-size:23px;color:#6a6a6a;font-family:'DejaVu Sans Light', 'DejaVu Sans', sans-serif;letter-spacing:-1.93px;">00000</span>
<span class="t" style="left:1031.6px;top:702.00px;font-size:23px;color:#d0d0d0;font-family:'DejaVu Sans Light', 'DejaVu Sans', sans-serif;">1</span>
<svg style="left:1092.8px;top:712.5px;" width="7" height="4.5" viewBox="0 0 7 4.5"><path d="M0.5 0.6L3.5 3.3L6.5 0.6" fill="none" stroke="#8a8a8a" stroke-width="1.2"/></svg>
<svg style="left:1125px;top:705px;" width="18" height="17" viewBox="0 0 18 17"><circle cx="8.5" cy="8.8" r="7" fill="none" stroke="#9a9a9a" stroke-width="1.1"/><path d="M7.6 4.6L8.4 9.4L12 6.4" fill="none" stroke="#5e5cf0" stroke-width="1.2"/><circle cx="15.4" cy="1.4" r="0.8" fill="#5e5cf0"/></svg>
<svg style="left:1481px;top:708px;" width="14" height="13" viewBox="0 0 14 13"><rect x="0.5" y="0.5" width="13" height="12" fill="none" stroke="#7c7c7c" stroke-width="1"/><path d="M3 0.5v12M11 0.5v12M3 6.5h8" stroke="#7c7c7c" stroke-width="1"/><path d="M1.75 1.6v10.4M12.25 1.6v10.4" stroke="#7c7c7c" stroke-width="1" stroke-dasharray="1 1.1"/></svg>
<svg style="left:1519.5px;top:708.5px;" width="15" height="14" viewBox="0 0 15 14"><path d="M0.8 5h2.6L6.2 2.6v8.4L3.4 8.6H0.8z" fill="none" stroke="#7c7c7c" stroke-width="1"/><path d="M8.4 3c1.8 2 1.8 5.6 0 7.6M10.4 0.8c3 3.4 3 8.6 0 12" fill="none" stroke="#7c7c7c" stroke-width="1"/></svg>
<svg style="left:1552px;top:707.5px;" width="16" height="14" viewBox="0 0 16 14"><path d="M7 0.6L0.8 7L7 13.4M13.4 0.6L7.2 7L13.4 13.4" fill="none" stroke="#8a8a8a" stroke-width="1"/></svg>
<div style="left:403px;top:730px;width:1162px;height:21px;background:#1f1f1f;"></div>
<div style="left:403px;top:751px;width:1162px;height:1px;background:#080808;"></div>
<div style="left:758px;top:730px;width:1px;height:254px;background:#080808;"></div>
<span class="t" style="left:411.6px;top:734.50px;font-size:12px;color:#dedede;letter-spacing:0.16px;">Timeline</span>
<svg style="left:666px;top:734.2px;" width="15" height="12" viewBox="0 0 15 12"><rect x="0" y="0" width="15" height="12" rx="0.6" fill="#787878"/><rect x="3.55" y="0.80" width="2.65" height="2.6" fill="#1c1c1c"/><rect x="8.85" y="0.80" width="2.65" height="2.6" fill="#1c1c1c"/><rect x="0.90" y="3.40" width="2.65" height="2.6" fill="#1c1c1c"/><rect x="6.20" y="3.40" width="2.65" height="2.6" fill="#1c1c1c"/><rect x="11.50" y="3.40" width="2.65" height="2.6" fill="#1c1c1c"/><rect x="3.55" y="6.00" width="2.65" height="2.6" fill="#1c1c1c"/><rect x="8.85" y="6.00" width="2.65" height="2.6" fill="#1c1c1c"/><rect x="0.90" y="8.60" width="2.65" height="2.6" fill="#1c1c1c"/><rect x="6.20" y="8.60" width="2.65" height="2.6" fill="#1c1c1c"/><rect x="11.50" y="8.60" width="2.65" height="2.6" fill="#1c1c1c"/></svg>
<svg style="left:699.6px;top:732.8px;" width="16" height="16" viewBox="0 0 16 16"><g transform="translate(8 8) scale(1)"><circle r="4.35" fill="none" stroke="#767676" stroke-width="1.9"/><rect x="-1" y="-6.8" width="2" height="2" fill="#767676" transform="rotate(0)"/><rect x="-1" y="-6.8" width="2" height="2" fill="#767676" transform="rotate(30)"/><rect x="-1" y="-6.8" width="2" height="2" fill="#767676" transform="rotate(60)"/><rect x="-1" y="-6.8" width="2" height="2" fill="#767676" transform="rotate(90)"/><rect x="-1" y="-6.8" width="2" height="2" fill="#767676" transform="rotate(120)"/><rect x="-1" y="-6.8" width="2" height="2" fill="#767676" transform="rotate(150)"/><rect x="-1" y="-6.8" width="2" height="2" fill="#767676" transform="rotate(180)"/><rect x="-1" y="-6.8" width="2" height="2" fill="#767676" transform="rotate(210)"/><rect x="-1" y="-6.8" width="2" height="2" fill="#767676" transform="rotate(240)"/><rect x="-1" y="-6.8" width="2" height="2" fill="#767676" transform="rotate(270)"/><rect x="-1" y="-6.8" width="2" height="2" fill="#767676" transform="rotate(300)"/><rect x="-1" y="-6.8" width="2" height="2" fill="#767676" transform="rotate(330)"/></g></svg>
<svg style="left:734px;top:734.2px;" width="15" height="13" viewBox="0 0 15 13"><rect x="3" y="0" width="12" height="8.8" rx="0.8" fill="#7a7a7a"/><rect x="0.6" y="4.6" width="11" height="7.8" rx="1" fill="none" stroke="#7a7a7a" stroke-width="1.1"/><rect x="1.2" y="8.9" width="9.8" height="2.9" fill="#1f1f1f"/></svg>
<svg style="left:1496px;top:735.5px;" width="26" height="12" viewBox="0 0 26 12"><path d="M6.3 0.7L11.6 6L6.3 11.3L1 6z" fill="none" stroke="#5a5a5a" stroke-width="1"/><path d="M7 6h8" stroke="#7a7a7a" stroke-width="1"/><path d="M19.6 0.5L25.1 6L19.6 11.5L14.1 6z" fill="#7e7e7e"/></svg>
<svg style="left:1535px;top:733.5px;" width="18.5" height="15" viewBox="0 0 18.5 15"><rect x="0" y="4.4" width="8" height="6" fill="#7e7e7e"/><rect x="10" y="4.4" width="8" height="6" fill="#7e7e7e"/><path d="M9 0.4v2M9 12.6v2M5.4 1.2l1 1.6M12.6 1.2l-1 1.6M5.4 13.8l1-1.6M12.6 13.8l-1-1.6" stroke="#7e7e7e" stroke-width="1"/></svg>
<div style="left:403px;top:773px;width:355px;height:1px;background:#080808;"></div>
<div style="left:403px;top:813px;width:355px;height:1px;background:#161616;"></div>
<div style="left:403px;top:869px;width:355px;height:39px;background:#4f4f4f;"></div>
<svg style="left:447.6px;top:788px;" width="11" height="12.5" viewBox="0 0 11 12.5"><path d="M0.5 0.5h6l4 4v7.5h-10z" fill="#a8a8a8"/><path d="M6.7 0.3v4h4z" fill="#1f1f1f" stroke="#1f1f1f" stroke-width="0.6"/><path d="M7.2 0.9l3 3h-3z" fill="#a8a8a8"/></svg>
<span class="t" style="left:467.3px;top:787.70px;font-size:11.5px;color:#d4d4d4;letter-spacing:0.53px;-webkit-text-stroke:0.2px;">Project</span>
<svg style="left:727.9px;top:788.2px;" width="12" height="10.8" viewBox="0 0 12 10.8"><rect x="3.6" y="4.7" width="8.1" height="5.8" rx="0.8" fill="#c4c4c4"/><path d="M1 5.4V3.7a2.2 2.2 0 0 1 4.4 0V4.8" fill="none" stroke="#c4c4c4" stroke-width="1.1"/></svg>
<div style="left:408.3px;top:835.1px;width:11.4px;height:11.4px;border-radius:3px;background:#404040;box-shadow:inset 0 0 0 0.7px #191919"></div>
<svg style="left:408.5px;top:835.5px;" width="11" height="11" viewBox="0 0 11 11"><path d="M2.8 5.8L4.7 7.9L8.3 3.1" fill="none" stroke="#6a6a6a" stroke-width="1.3"/></svg>
<svg style="left:435.2px;top:837.3px;" width="8.5" height="7.5" viewBox="0 0 8.5 7.5"><path d="M0 0h8.4L4.2 7.3z" fill="#d8d8d8"/></svg>
<svg style="left:446px;top:835px;" width="14.5" height="13.5" viewBox="0 0 14.5 13.5"><rect x="3.6" y="3.6" width="10.9" height="9.9" fill="#8c8c8c"/><rect x="-0.6" y="-0.6" width="11.4" height="10.6" fill="#1d1d1d"/><rect x="0" y="0" width="10.2" height="9.4" fill="#b8b8b8"/></svg>
<span class="t" style="left:466.9px;top:835.90px;font-size:11.5px;color:#c8c8c8;letter-spacing:0.48px;text-decoration:underline;text-underline-offset:2px;text-decoration-thickness:1.3px;-webkit-text-stroke:0.2px;">Group</span>
<svg style="left:712px;top:835px;" width="12" height="13" viewBox="0 0 12 13"><rect x="0" y="0" width="8" height="1.4" fill="#8a8a8a" opacity=".7"/><rect x="0" y="2.6" width="4" height="10.4" fill="#8a8a8a"/><rect x="5" y="2.6" width="6.6" height="7" fill="#a8a8a8"/></svg>
<svg style="left:727.9px;top:835.4000000000001px;" width="12" height="10.8" viewBox="0 0 12 10.8"><rect x="3.6" y="4.7" width="8.1" height="5.8" rx="0.8" fill="#c4c4c4"/><path d="M1 5.4V3.7a2.2 2.2 0 0 1 4.4 0V4.8" fill="none" stroke="#c4c4c4" stroke-width="1.1"/></svg>
<div style="left:408.3px;top:882.1px;width:11.4px;height:11.4px;border-radius:3px;background:#686868;box-shadow:inset 0 0 0 0.7px #3c3c3c"></div>
<svg style="left:408.5px;top:882.5px;" width="11" height="11" viewBox="0 0 11 11"><path d="M2.8 5.8L4.7 7.9L8.3 3.1" fill="none" stroke="#8c8c8c" stroke-width="1.3"/></svg>
<span class="t" style="left:460.8px;top:881.90px;font-size:14.5px;color:#b4b4b4;font-family:'Liberation Serif', serif;">T</span>
<span class="t" style="left:480.2px;top:882.90px;font-size:11.5px;color:#fff;font-weight:700;letter-spacing:0.08px;">Why doesn't this work?</span>
<svg style="left:727.9px;top:882.6px;" width="12" height="10.8" viewBox="0 0 12 10.8"><rect x="3.6" y="4.7" width="8.1" height="5.8" rx="0.8" fill="#c4c4c4"/><path d="M1 5.4V3.7a2.2 2.2 0 0 1 4.4 0V4.8" fill="none" stroke="#c4c4c4" stroke-width="1.1"/></svg>
<div style="left:759px;top:752px;width:806px;height:21.5px;background:#202020;"></div>
<div style="left:759px;top:752px;width:43px;height:232px;background:#1b1b1b;"></div>
<div style="left:802px;top:773.5px;width:735px;height:211px;background:#202020;"></div>
<div style="left:1537px;top:752px;width:28px;height:232px;background:#1a1a1a;"></div>
<svg style="left:802px;top:757px;" width="737" height="12" viewBox="0 0 737 12"><path d="M7.75 0v12M15.10 0v12M22.45 0v12M29.80 0v12M37.15 0v12M44.50 0v12M51.85 0v12M59.20 0v12M66.55 0v12M73.90 0v12M81.25 0v12M88.60 0v12M95.95 0v12M103.30 0v12M110.65 0v12M118.00 0v12M125.35 0v12M132.70 0v12M140.05 0v12M154.75 0v12M162.10 0v12M169.45 0v12M176.80 0v12M184.15 0v12M191.50 0v12M198.85 0v12M206.20 0v12M213.55 0v12M220.90 0v12M228.25 0v12M235.60 0v12M242.95 0v12M250.30 0v12M257.65 0v12M265.00 0v12M272.35 0v12M279.70 0v12M287.05 0v12M301.75 0v12M309.10 0v12M316.45 0v12M323.80 0v12M331.15 0v12M338.50 0v12M345.85 0v12M353.20 0v12M360.55 0v12M367.90 0v12M375.25 0v12M382.60 0v12M389.95 0v12M397.30 0v12M404.65 0v12M412.00 0v12M419.35 0v12M426.70 0v12M434.05 0v12M448.75 0v12M456.10 0v12M463.45 0v12M470.80 0v12M478.15 0v12M485.50 0v12M492.85 0v12M500.20 0v12M507.55 0v12M514.90 0v12M522.25 0v12M529.60 0v12M536.95 0v12M544.30 0v12M551.65 0v12M559.00 0v12M566.35 0v12M573.70 0v12M581.05 0v12M595.75 0v12M603.10 0v12M610.45 0v12M617.80 0v12M625.15 0v12M632.50 0v12M639.85 0v12M647.20 0v12M654.55 0v12M661.90 0v12M669.25 0v12M676.60 0v12M683.95 0v12M691.30 0v12M698.65 0v12M706.00 0v12M713.35 0v12M720.70 0v12M728.05 0v12" stroke="#2d2d2d" stroke-width="1.3" fill="none"/></svg>
<div style="left:948px;top:757px;width:2px;height:12px;background:#3e3e3e;"></div>
<span class="t" style="left:952.2px;top:757.80px;font-size:10px;color:#565656;letter-spacing:0.15px;">61</span>
<div style="left:949px;top:776px;width:1px;height:208px;background:repeating-linear-gradient(180deg,#2e2e2e 0,#2e2e2e 2px,transparent 2px,transparent 4px)"></div>
<div style="left:1095px;top:757px;width:2px;height:12px;background:#3e3e3e;"></div>
<span class="t" style="left:1099.2px;top:757.80px;font-size:10px;color:#565656;letter-spacing:0.15px;">121</span>
<div style="left:1096px;top:776px;width:1px;height:208px;background:repeating-linear-gradient(180deg,#2e2e2e 0,#2e2e2e 2px,transparent 2px,transparent 4px)"></div>
<div style="left:1242px;top:757px;width:2px;height:12px;background:#3e3e3e;"></div>
<span class="t" style="left:1246.2px;top:757.80px;font-size:10px;color:#565656;letter-spacing:0.15px;">181</span>
<div style="left:1243px;top:776px;width:1px;height:208px;background:repeating-linear-gradient(180deg,#2e2e2e 0,#2e2e2e 2px,transparent 2px,transparent 4px)"></div>
<div style="left:1389px;top:757px;width:2px;height:12px;background:#3e3e3e;"></div>
<span class="t" style="left:1393.2px;top:757.80px;font-size:10px;color:#565656;letter-spacing:0.15px;">241</span>
<div style="left:1390px;top:776px;width:1px;height:208px;background:repeating-linear-gradient(180deg,#2e2e2e 0,#2e2e2e 2px,transparent 2px,transparent 4px)"></div>
<span class="t" style="left:1542.2px;top:757.80px;font-size:10px;color:#3c3c3c;letter-spacing:0px;">301</span>
<svg style="left:1535.6px;top:757.5px;" width="7" height="11" viewBox="0 0 7 11"><path d="M0.7 0v11" stroke="#e8e8e8" stroke-width="1.4"/><path d="M6.4 0.6L1.4 5.5L6.4 10.4z" fill="#d8d8d8"/></svg>
<div style="left:803px;top:814px;width:733px;height:41px;border-radius:2px 3px 3px 3px;background:#1d2e4f;overflow:hidden"><div style="left:0;top:0;width:100%;height:14px;background:#09111f"></div></div>
<div style="left:803px;top:869px;width:733px;height:26px;border-radius:3px;background:#1d2e4f"></div>
<span class="t" style="left:807.4px;top:815.70px;font-size:11px;color:#7d98c6;letter-spacing:0.16px;">Group</span>
<div style="left:807px;top:841.7px;width:23px;height:2.4px;background:#fff;"></div>
<div style="left:807px;top:881.7px;width:22px;height:2.4px;background:#fff;"></div>
<span class="t" style="left:834.3px;top:836.50px;font-size:11px;color:#fff;font-weight:700;letter-spacing:-0.08px;">Why doesn't this work?</span>
<span class="t" style="left:833.2px;top:877.10px;font-size:11px;color:#fff;font-weight:700;letter-spacing:-0.07px;">Why doesn't this work?</span>
<div style="left:801.5px;top:760px;width:1.3px;height:224px;background:#c8c8c8;"></div>
<svg style="left:797px;top:757px;" width="10.4" height="12" viewBox="0 0 10.4 12"><path d="M5.2 0.6H9.2a0.6 0.6 0 0 1 .6 .6V7.6L5.2 11.4z" fill="#2c2c2c"/><path d="M5.2 0.6H1.2a0.6 0.6 0 0 0-.6 .6V7.6L5.2 11.4z" fill="#b4b4b4"/><path d="M1.4 2.2L4.6 5.3L1.4 8.4z" fill="#3a3a3a"/><path d="M1.2 0.6h8a0.6 0.6 0 0 1 .6 .6V7.6L5.2 11.4L0.6 7.6V1.2a0.6 0.6 0 0 1 .6-.6z" fill="none" stroke="#e4e4e4" stroke-width="1"/><path d="M5.2 0.6v11" stroke="#f4f4f4" stroke-width="1.1"/></svg>
</div></div>
</body></html>
